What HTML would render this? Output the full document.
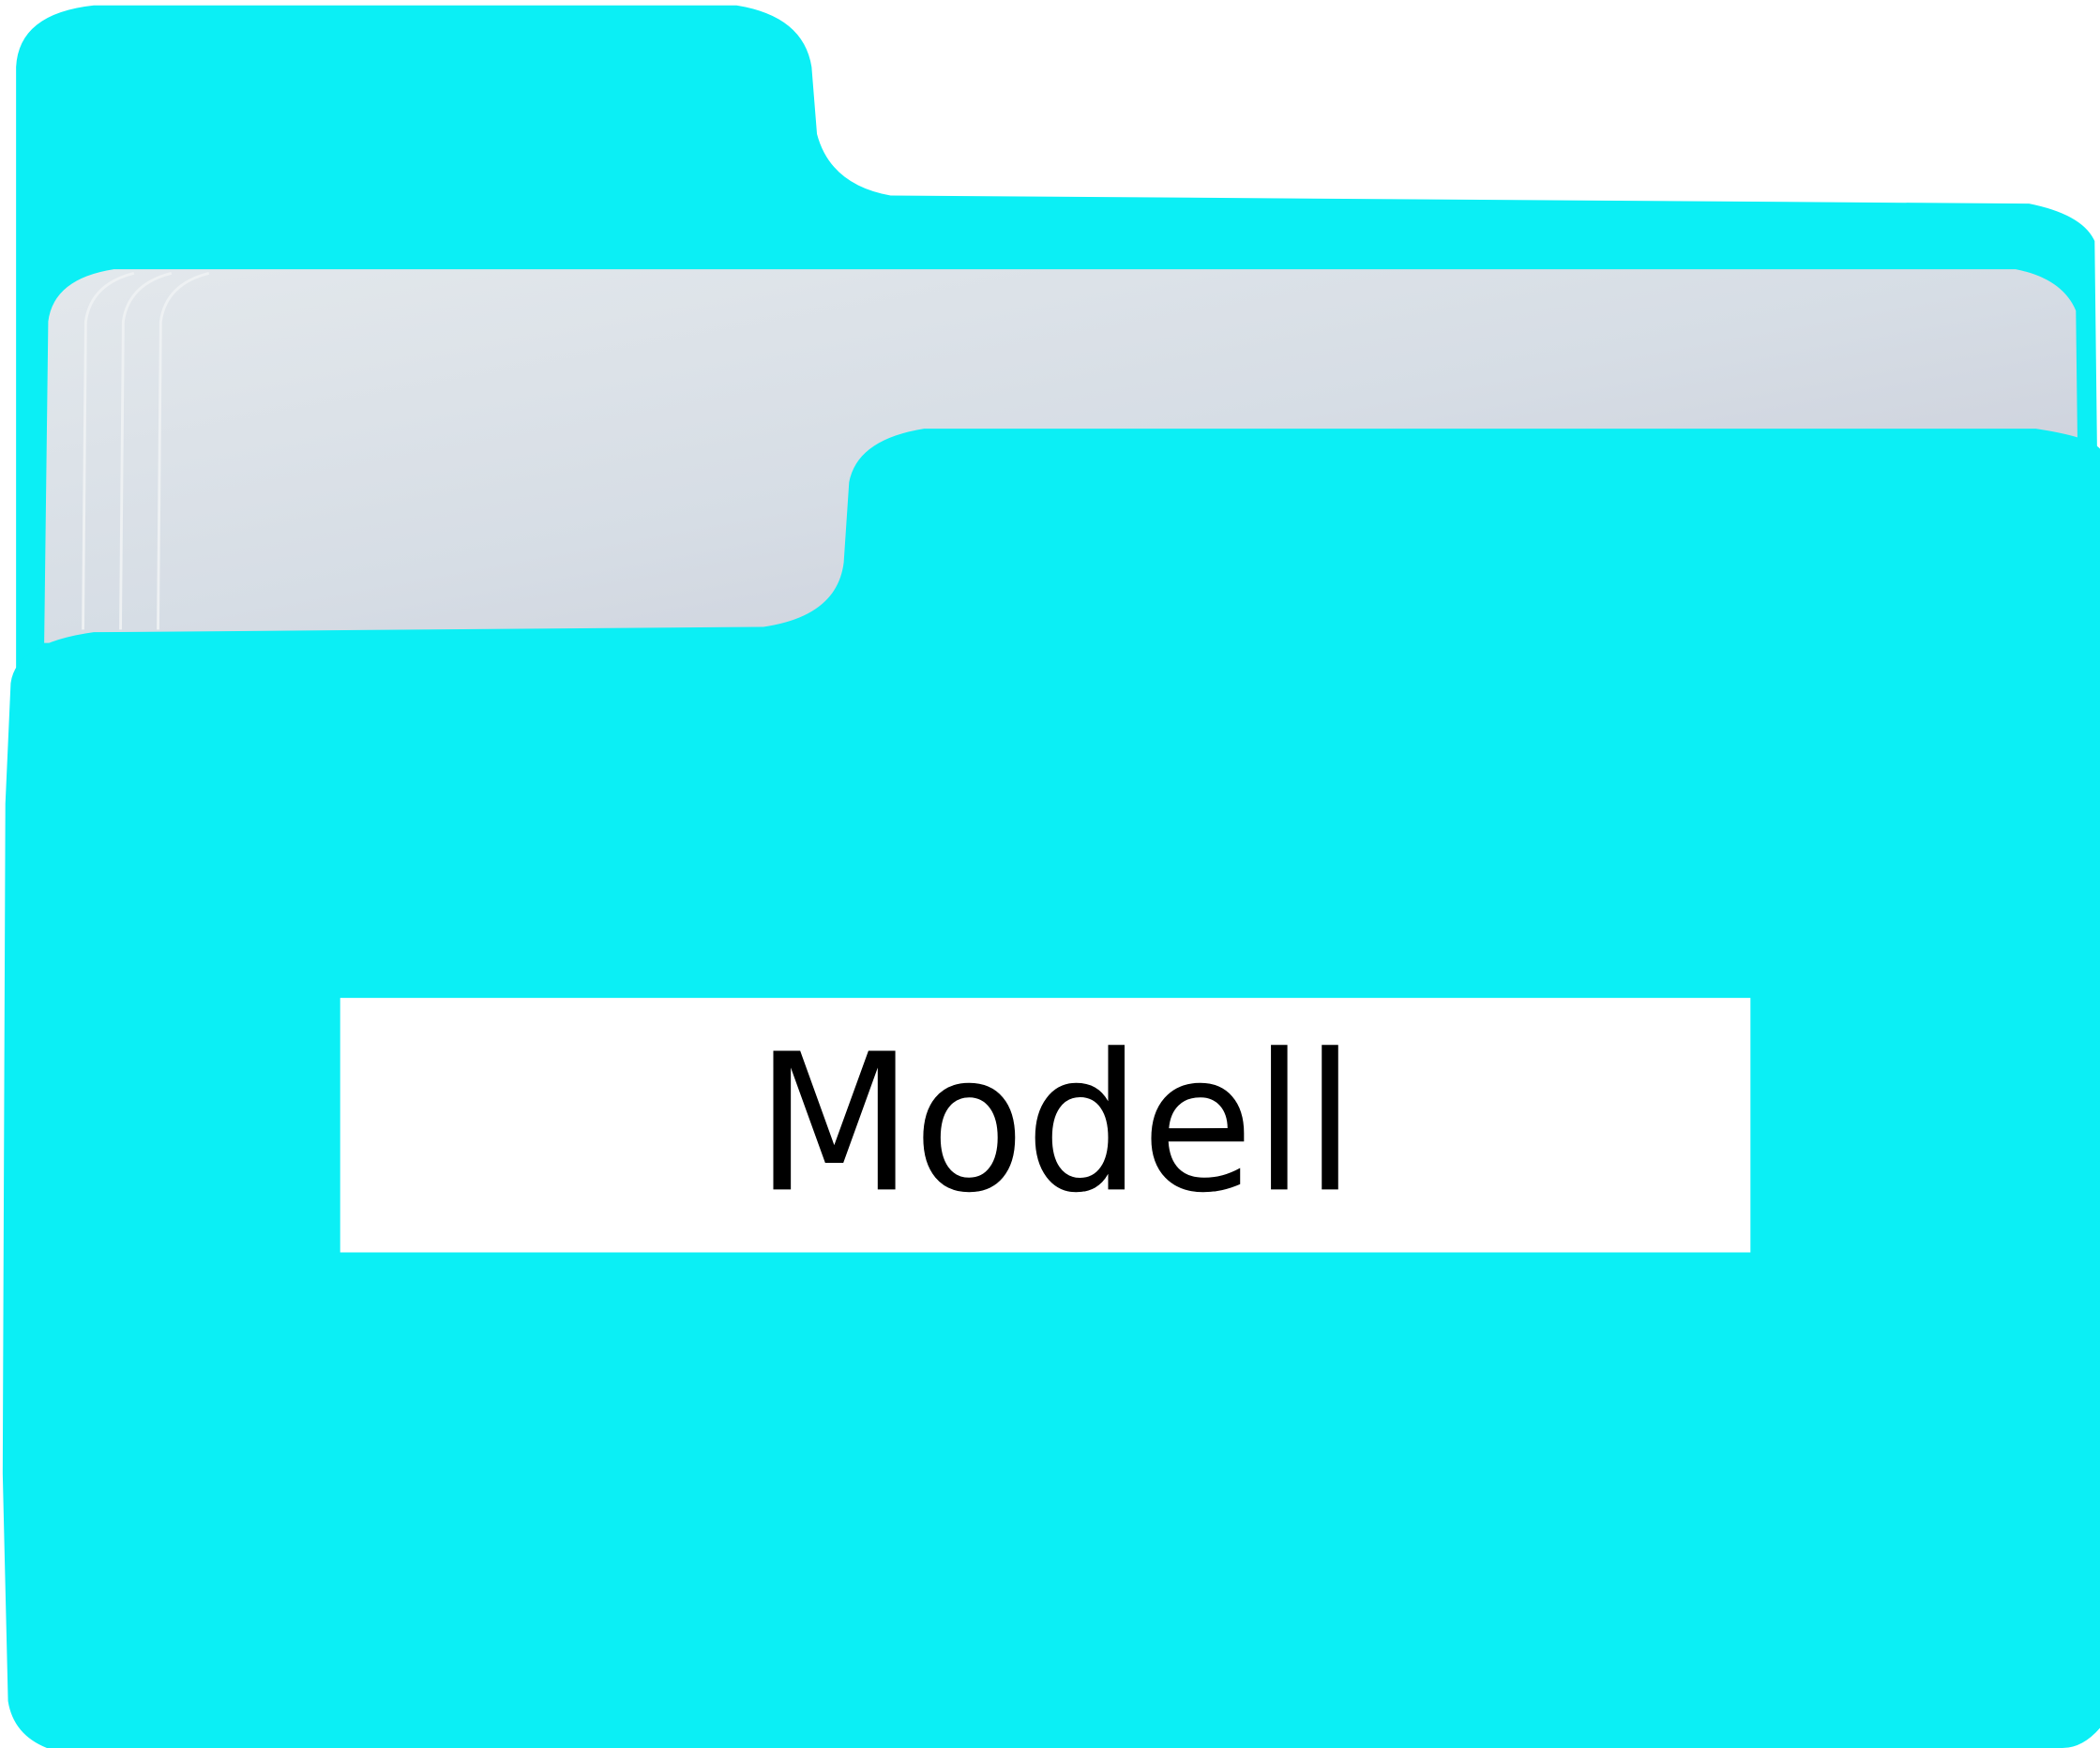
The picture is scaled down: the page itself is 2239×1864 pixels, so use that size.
<!DOCTYPE html>
<html><head><meta charset="utf-8">
<style>
html,body{margin:0;padding:0;background:#fff;}
svg{display:block;}
</style></head>
<body>
<svg width="2239" height="1864" viewBox="0 0 1568 1305" preserveAspectRatio="none" xmlns="http://www.w3.org/2000/svg">
<defs>
<linearGradient id="pg" x1="0" y1="0" x2="1" y2="1">
<stop offset="0" stop-color="#e3e8ec"/>
<stop offset="0.5" stop-color="#d6dde5"/>
<stop offset="1" stop-color="#c7c9d6"/>
</linearGradient>
</defs>
<path d="M12 50 Q14 10 70 4 L550 4 Q600 12 606 50 L610 100 Q620 138 665 146 L1515 152 Q1555 160 1564 180 L1568 520 L12 520 Z" fill="#0beff5"/>
<path d="M33 480 L36 240 Q40 208 85 201 L1505 201 Q1540 208 1550 232 L1553 480 Z" fill="url(#pg)"/>
<path d="M62 470 L64 240 Q68 212 100 204 M90 470 L92 240 Q96 212 128 204 M118 470 L120 240 Q124 212 156 204" stroke="#eef1f3" stroke-width="2" fill="none"/>
<path d="M8 510 Q12 480 70 472 L570 468 Q625 460 630 420 L634 360 Q640 328 690 320 L1520 320 Q1560 326 1568 335 L1568 1290 Q1555 1305 1540 1305 L35 1305 Q10 1295 6 1270 L2 1100 L4 600 Z" fill="#0beff5"/>
<rect x="254" y="745" width="1053" height="190" fill="#fff"/>
<text x="564" y="888" textLength="448" lengthAdjust="spacingAndGlyphs" font-family="DejaVu Sans, sans-serif" font-size="142" fill="#000">Modell</text>
</svg>
</body></html>
